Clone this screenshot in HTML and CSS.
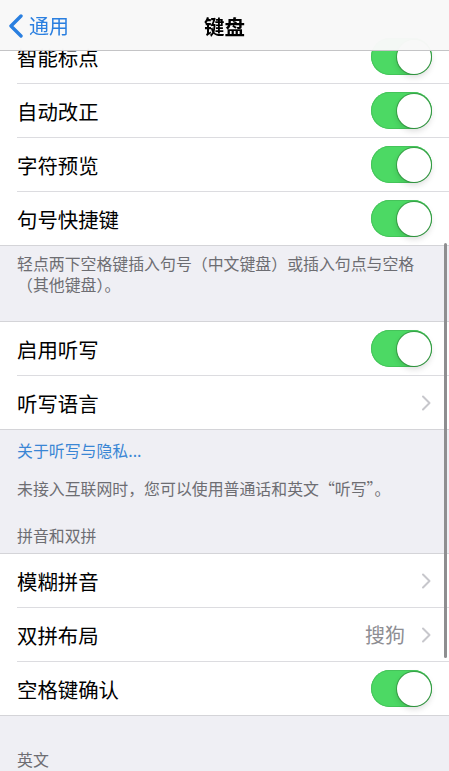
FILE: index.html
```html
<!DOCTYPE html>
<html lang="zh-CN">

<head>
    <meta charset="UTF-8">
    <meta name="viewport" content="width=device-width, initial-scale=1.0">
    <title>键盘</title>
    <link rel="stylesheet" href="styles.css">
</head>

<body>
    <div class="navbar">
        <a class="back" href="#">
            <svg class="back-icon" width="18" height="24" viewBox="0 0 18 24">
                <polyline points="14,2 4,12 14,22" fill="none" stroke="#2a7fe0" stroke-width="3.4" stroke-linecap="round" stroke-linejoin="round"/>
            </svg>
            <span>通用</span>
        </a>
        <div class="title">键盘</div>
    </div>

    <div class="scrollbar"></div>

    <div class="content">
        <div class="group first">
            <div class="row"><div class="row-inner"><span class="label">智能标点</span><span class="switch"></span></div></div>
            <div class="row"><div class="row-inner"><span class="label">自动改正</span><span class="switch"></span></div></div>
            <div class="row"><div class="row-inner"><span class="label">字符预览</span><span class="switch"></span></div></div>
            <div class="row"><div class="row-inner"><span class="label">句号快捷键</span><span class="switch"></span></div></div>
        </div>
        <div class="footer footer-one">
            轻点两下空格键插入句号（中文键盘）或插入句点与空格<br>（其他键盘）。
        </div>

        <div class="group">
            <div class="row"><div class="row-inner"><span class="label">启用听写</span><span class="switch"></span></div></div>
            <div class="row">
                <div class="row-inner">
                    <span class="label">听写语言</span>
                    <svg class="chevron" width="10" height="16" viewBox="0 0 10 16">
                        <polyline points="2,1.5 8.5,8 2,14.5" fill="none" stroke="#c7c7cc" stroke-width="2" stroke-linecap="round" stroke-linejoin="round"/>
                    </svg>
                </div>
            </div>
        </div>
        <div class="footer footer-two">
            <a class="link" href="#">关于听写与隐私...</a>
            <p>未接入互联网时，您可以使用普通话和英文“听写”。</p>
        </div>

        <div class="header">拼音和双拼</div>
        <div class="group">
            <div class="row">
                <div class="row-inner">
                    <span class="label">模糊拼音</span>
                    <svg class="chevron" width="10" height="16" viewBox="0 0 10 16">
                        <polyline points="2,1.5 8.5,8 2,14.5" fill="none" stroke="#c7c7cc" stroke-width="2" stroke-linecap="round" stroke-linejoin="round"/>
                    </svg>
                </div>
            </div>
            <div class="row">
                <div class="row-inner">
                    <span class="label">双拼布局</span>
                    <span class="value">搜狗</span>
                    <svg class="chevron" width="10" height="16" viewBox="0 0 10 16">
                        <polyline points="2,1.5 8.5,8 2,14.5" fill="none" stroke="#c7c7cc" stroke-width="2" stroke-linecap="round" stroke-linejoin="round"/>
                    </svg>
                </div>
            </div>
            <div class="row"><div class="row-inner"><span class="label">空格键确认</span><span class="switch"></span></div></div>
        </div>

        <div class="header header-last">英文</div>
    </div>
</body>

</html>
```

FILE: styles.css
```css
body {
    margin: 0;
    padding: 0;
    background-color: #efeff4;
    font-family: "Noto Sans CJK SC", "Noto Sans", sans-serif;
    color: #000;
    overflow: hidden;
    height: 771px;
}

.navbar {
    position: fixed;
    top: 0;
    left: 0;
    right: 0;
    height: 50px;
    background-color: rgba(248, 248, 248, 0.98);
    border-bottom: 1px solid #c4c4c6;
    display: flex;
    align-items: center;
    justify-content: center;
    z-index: 10;
}

.back {
    position: absolute;
    left: 7px;
    top: 0;
    height: 50px;
    display: flex;
    align-items: center;
    gap: 4px;
    color: #2a7fe0;
    text-decoration: none;
    font-size: 20px;
}

.back-icon {
    margin-top: 2px;
}

.title {
    font-size: 20.5px;
    font-weight: 600;
    margin-top: 1px;
}

.scrollbar {
    position: fixed;
    right: 2px;
    top: 243px;
    width: 3px;
    height: 415px;
    border-radius: 2px;
    background-color: #8e8e90;
    z-index: 5;
}

.content {
    padding-top: 30px;
}

.group {
    background-color: #fff;
    border-top: 1px solid #d4d4d8;
    border-bottom: 1px solid #d4d4d8;
}

.group.first {
    border-top: none;
}

.row {
    padding-left: 17px;
}

.row-inner {
    height: 54px;
    box-sizing: border-box;
    display: flex;
    align-items: center;
    padding-right: 17px;
    border-bottom: 1px solid #dcdce0;
}

.row:last-child .row-inner {
    border-bottom: none;
    height: 53px;
}

.label {
    flex: 1;
    font-size: 20.4px;
}

.value {
    font-size: 20px;
    color: #8e8e93;
    margin-right: 16px;
}

.chevron {
    margin-right: 1px;
}

.switch {
    position: relative;
    width: 61px;
    height: 37px;
    border-radius: 19px;
    background-color: #4cd964;
    box-shadow: inset 0 0 0 1px #45c45a;
}

.switch::after {
    content: "";
    position: absolute;
    right: 1.5px;
    top: 1.5px;
    width: 34px;
    height: 34px;
    border-radius: 50%;
    background-color: #fff;
    box-shadow: 0 0 0 1px rgba(40, 120, 50, 0.55), 0 3px 6px rgba(0, 0, 0, 0.15);
}

.footer {
    padding-left: 17px;
    padding-right: 17px;
    font-size: 15.9px;
    line-height: 21px;
    color: #6d6d72;
}

.footer-one {
    padding-top: 7px;
    padding-bottom: 26px;
}

.footer-two {
    padding-top: 10px;
}

.footer-two p {
    margin: 17px 0 0;
}

.link {
    color: #3a86d4;
    text-decoration: none;
}

.header {
    padding: 26px 17px 7px;
    font-size: 15.9px;
    line-height: 21px;
    color: #6d6d72;
}

.header-last {
    padding-top: 33px;
}
```
